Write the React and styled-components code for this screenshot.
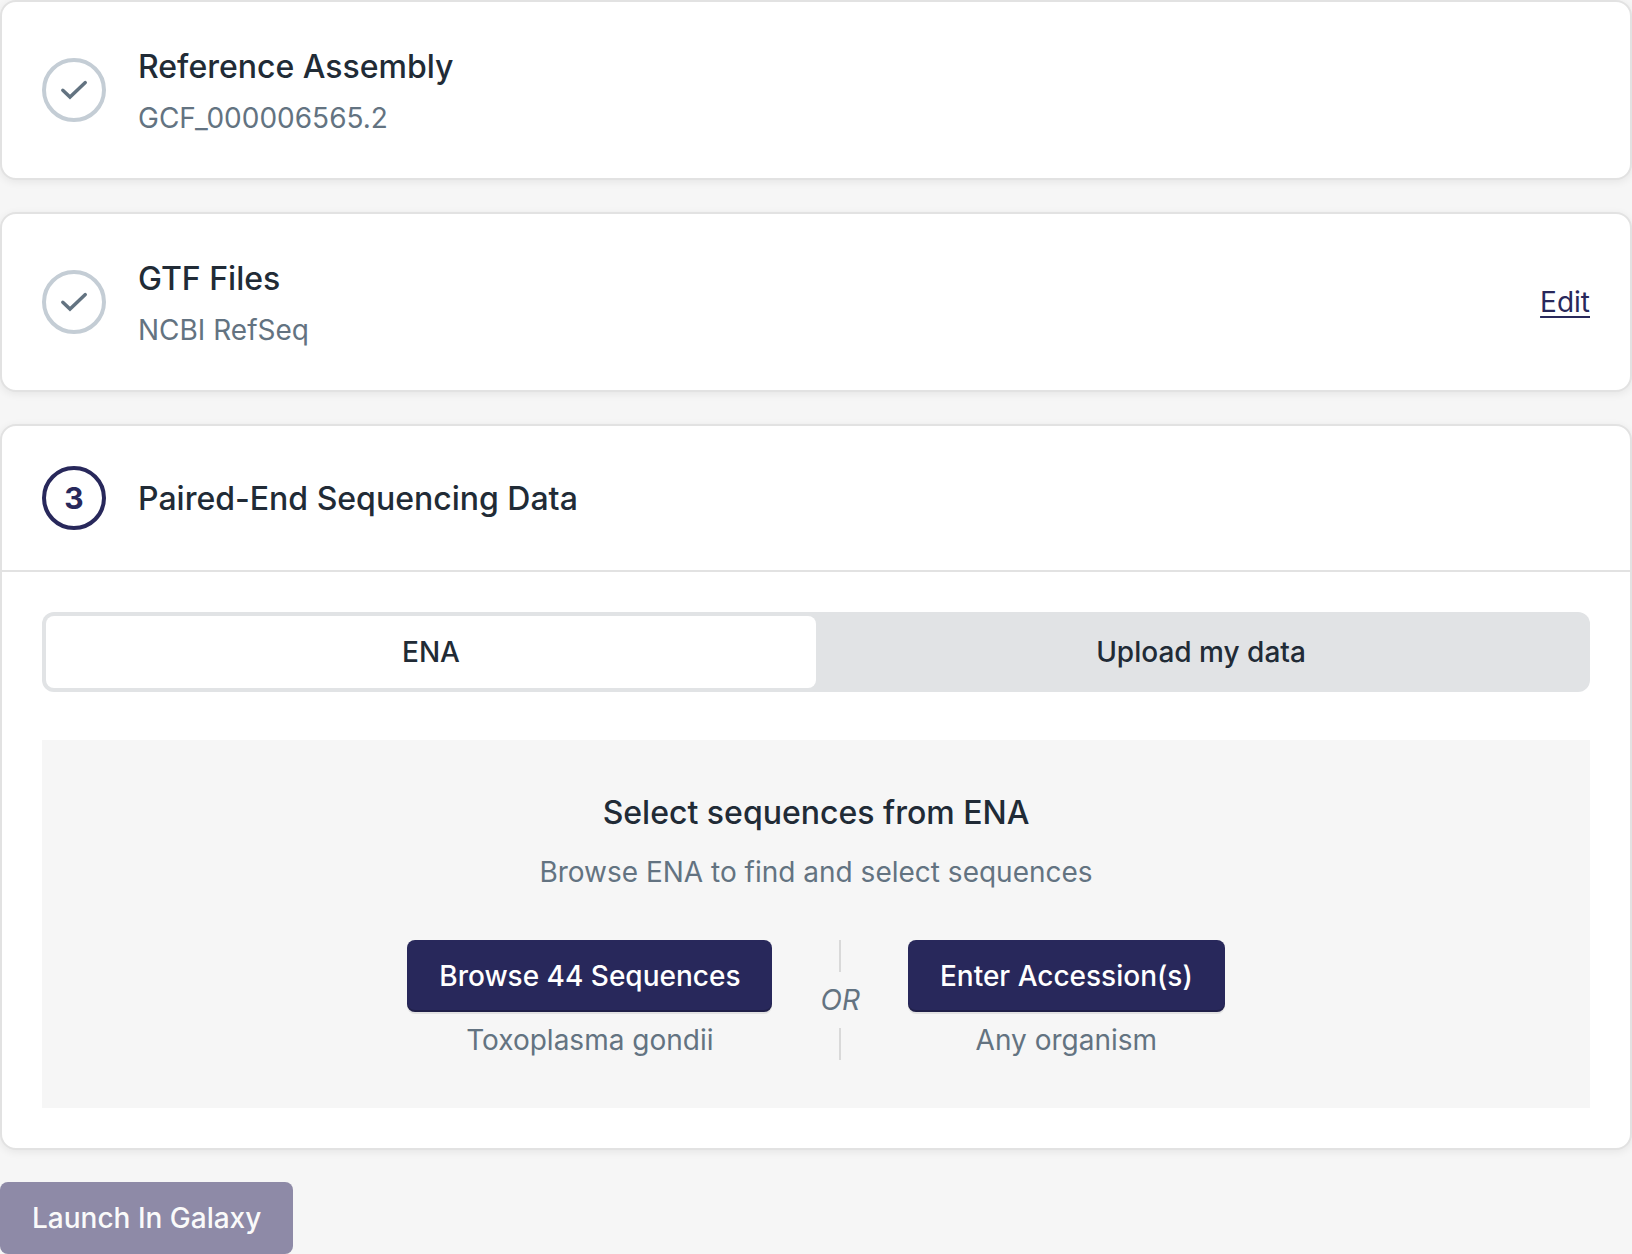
import React, { useState } from "react";
import styled, { createGlobalStyle, css } from "styled-components";

const color = {
  ink: "#212b36",
  inkLight: "#637381",
  primary: "#28285b",
  primaryMuted: "#28205a",
  smoke: "#e1e3e5",
  smokeDark: "#c4cdd5",
  smokeLight: "#f6f6f6",
  line: "#e2e2e2",
  white: "#ffffff",
};

const GlobalStyle = createGlobalStyle`
  *, *::before, *::after {
    box-sizing: border-box;
  }

  body {
    margin: 0;
    background: ${color.smokeLight};
    color: ${color.ink};
    font-family: Inter, "Liberation Sans", sans-serif;
  }
`;

const body = css`
  font-size: 28px;
  line-height: 40px;
  font-weight: 400;
`;

const bodyStrong = css`
  font-size: 28px;
  line-height: 40px;
  font-weight: 500;
`;

const Stepper = styled.main`
  display: flex;
  flex-direction: column;
  align-items: stretch;
  gap: 32px;
`;

const Card = styled.section`
  background: ${color.white};
  border: 2px solid ${color.line};
  border-radius: 16px;
  box-shadow: 0 2px 8px rgba(0, 0, 0, 0.07);
`;

const StepHeader = styled.header`
  display: flex;
  align-items: center;
  gap: 32px;
  padding: 40px;
`;

const StepIcon = styled.span`
  display: flex;
  flex: none;
  align-items: center;
  justify-content: center;
  width: 64px;
  height: 64px;
  border: 4px solid ${({ $active }) => ($active ? color.primary : color.smokeDark)};
  border-radius: 50%;
  color: ${({ $active }) => ($active ? color.primary : color.inkLight)};
  font-size: 30px;
  line-height: 40px;
  font-weight: 700;
`;

const StepLabel = styled.div`
  display: flex;
  flex: 1;
  flex-direction: column;
  gap: 7px;
`;

const Heading = styled.h2`
  margin: 0;
  font-size: 32px;
  line-height: 49px;
  font-weight: 500;
`;

const Description = styled.p`
  ${body}
  margin: 0;
  color: ${color.inkLight};
`;

const EditLink = styled.a`
  ${body}
  color: ${color.primary};
  text-decoration: underline;
  text-decoration-thickness: 2px;
  text-underline-offset: 4px;
`;

const StepContent = styled.div`
  display: flex;
  flex-direction: column;
  gap: 48px;
  padding: 40px;
  border-top: 2px solid ${color.line};
`;

const Tabs = styled.div`
  display: grid;
  grid-template-columns: 1fr 1fr;
  padding: 4px;
  border-radius: 12px;
  background: ${color.smoke};
`;

const Tab = styled.button`
  ${bodyStrong}
  padding: 16px;
  border: 0;
  border-radius: 8px;
  background: ${({ $selected }) => ($selected ? color.white : "transparent")};
  color: ${color.ink};
  font-family: inherit;
  cursor: pointer;
`;

const Panel = styled.div`
  display: flex;
  flex-direction: column;
  align-items: center;
  gap: 48px;
  padding: 48px;
  background: ${color.smokeLight};
`;

const PanelIntro = styled.div`
  display: flex;
  flex-direction: column;
  gap: 15px;
  text-align: center;
`;

const Choices = styled.div`
  display: flex;
  gap: 48px;
`;

const Choice = styled.div`
  display: flex;
  flex-direction: column;
  gap: 8px;
  text-align: center;
`;

const Button = styled.button`
  ${bodyStrong}
  padding: 16px 32px;
  border: 0;
  border-radius: 8px;
  background: ${color.primary};
  box-shadow: 0 2px 0 rgba(0, 0, 0, 0.08), inset 0 -2px 0 rgba(0, 0, 0, 0.2);
  color: ${color.white};
  font-family: inherit;
  cursor: pointer;

  &:disabled {
    align-self: flex-start;
    background: ${color.primaryMuted};
    box-shadow: none;
    opacity: 0.5;
    cursor: default;
  }
`;

const Separator = styled.div`
  ${body}
  display: flex;
  flex-direction: column;
  align-items: center;
  gap: 8px;
  color: ${color.inkLight};
  font-style: italic;

  &::before,
  &::after {
    content: "";
    flex: 1;
    width: 2px;
    background: #d9d9d9;
  }
`;

function CheckIcon() {
  return (
    <svg width="40" height="40" viewBox="0 0 40 40" fill="none" aria-hidden="true">
      <path
        d="M8.8 20.2 L16 27.1 L31.3 12.6"
        stroke="currentColor"
        strokeWidth="3.4"
        strokeLinecap="round"
      />
    </svg>
  );
}

function Step({ title, value, number, action, children }) {
  return (
    <Card>
      <StepHeader>
        <StepIcon $active={Boolean(number)}>{number || <CheckIcon />}</StepIcon>
        <StepLabel>
          <Heading>{title}</Heading>
          {value && <Description>{value}</Description>}
        </StepLabel>
        {action}
      </StepHeader>
      {children && <StepContent>{children}</StepContent>}
    </Card>
  );
}

const sources = ["ENA", "Upload my data"];

export default function App() {
  const [source, setSource] = useState(sources[0]);

  return (
    <>
      <GlobalStyle />
      <Stepper>
        <Step title="Reference Assembly" value="GCF_000006565.2" />
        <Step
          title="GTF Files"
          value="NCBI RefSeq"
          action={<EditLink href="#gtf-files">Edit</EditLink>}
        />
        <Step title="Paired-End Sequencing Data" number="3">
          <Tabs role="tablist">
            {sources.map((name) => (
              <Tab
                key={name}
                type="button"
                role="tab"
                aria-selected={name === source}
                $selected={name === source}
                onClick={() => setSource(name)}
              >
                {name}
              </Tab>
            ))}
          </Tabs>
          <Panel role="tabpanel">
            <PanelIntro>
              <Heading as="h3">Select sequences from ENA</Heading>
              <Description>Browse ENA to find and select sequences</Description>
            </PanelIntro>
            <Choices>
              <Choice>
                <Button type="button">Browse 44 Sequences</Button>
                <Description>Toxoplasma gondii</Description>
              </Choice>
              <Separator>OR</Separator>
              <Choice>
                <Button type="button">Enter Accession(s)</Button>
                <Description>Any organism</Description>
              </Choice>
            </Choices>
          </Panel>
        </Step>
        <Button type="button" disabled>
          Launch In Galaxy
        </Button>
      </Stepper>
    </>
  );
}
